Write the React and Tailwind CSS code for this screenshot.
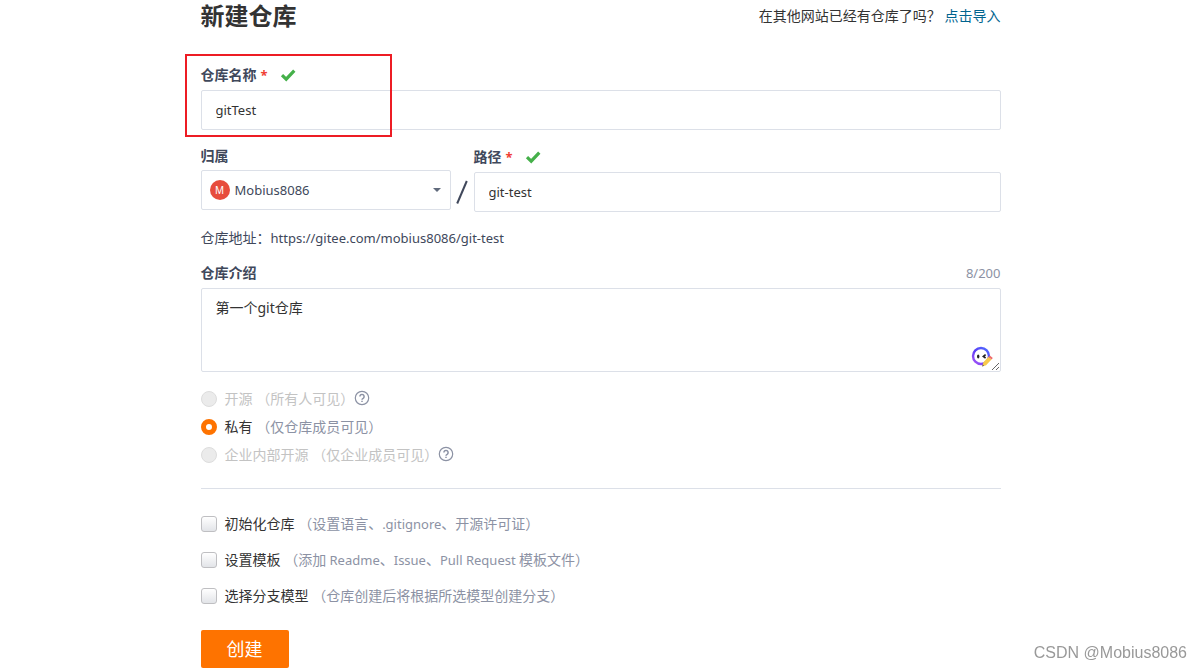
import React from 'react';

const visibilityOptions = [
  { value: 'public', label: '开源', hint: '（所有人可见）', disabled: true, help: true },
  { value: 'private', label: '私有', hint: '（仅仓库成员可见）', disabled: false, help: false },
  { value: 'enterprise', label: '企业内部开源', hint: '（仅企业成员可见）', disabled: true, help: true },
];

const setupOptions = [
  { id: 'init', label: '初始化仓库', hint: <>（设置语言、<Latin>.gitignore</Latin>、开源许可证）</> },
  {
    id: 'template',
    label: '设置模板',
    hint: <>（添加<Latin> Readme</Latin>、<Latin>Issue</Latin>、<Latin>Pull Request </Latin>模板文件）</>,
  },
  { id: 'branch', label: '选择分支模型', hint: '（仓库创建后将根据所选模型创建分支）' },
];

function Latin({ children }) {
  return <span className="text-[13px]">{children}</span>;
}

function ValidIcon() {
  return (
    <svg viewBox="0 0 16 16" className="w-4 h-4 ml-3" fill="none">
      <path d="M2 8.2l4.2 4L14.3 3.6" stroke="#45b04a" strokeWidth="3.2" />
    </svg>
  );
}

function FieldLabel({ htmlFor, children, required, valid }) {
  return (
    <div className="flex items-center mb-1 leading-[22px]">
      <label htmlFor={htmlFor} className="font-bold text-[#40485b]">
        {children}
        {required && <span className="ml-1 text-[13px] text-[#f04134]">*</span>}
      </label>
      {valid && <ValidIcon />}
    </div>
  );
}

function HelpIcon() {
  return (
    <svg viewBox="0 0 16 16" className="w-4 h-4 mb-0.5 text-[#8c92a4]" fill="none" stroke="currentColor">
      <circle cx="8" cy="8" r="6.7" strokeWidth="1.2" />
      <path d="M5.9 6.5a2.1 2.1 0 1 1 3.2 1.8c-.7.4-1.1.7-1.1 1.4" strokeWidth="1.5" />
      <path d="M8 10.7v1.4" strokeWidth="1.5" />
    </svg>
  );
}

function AssistantIcon() {
  return (
    <svg viewBox="0 0 22 22" className="w-[22px] h-[22px]" fill="none">
      <defs>
        <linearGradient id="ring" x1="3" y1="18" x2="17" y2="3" gradientUnits="userSpaceOnUse">
          <stop offset="0" stopColor="#a855f7" />
          <stop offset="0.5" stopColor="#5b3df5" />
          <stop offset="1" stopColor="#4f6bff" />
        </linearGradient>
      </defs>
      <circle cx="10" cy="10" r="8" stroke="url(#ring)" strokeWidth="2.4" fill="#fff" />
      <ellipse cx="7.2" cy="10.4" rx="1.2" ry="2" fill="#222" />
      <path d="M14.6 8.6l-2.2 1.8 2.2 1.6" stroke="#222" strokeWidth="1.7" />
      <path d="M11.2 20.4l1.1-3.9 5.2-5.7 3 2.6-5.4 5.9z" fill="#f8c94a" />
      <path d="M17.5 10.8l1.3-1.4 3 2.6-1.3 1.4z" fill="#ef6a6a" />
      <path d="M11.2 20.4l.5-1.8 1.4 1.2z" fill="#555" />
    </svg>
  );
}

export default function App() {
  const [name, setName] = React.useState('gitTest');
  const [path, setPath] = React.useState('git-test');
  const [intro, setIntro] = React.useState('第一个git仓库');
  const [visibility, setVisibility] = React.useState('private');

  return (
    <div className="bg-white text-sm text-[#333] font-['Noto_Sans','Noto_Sans_CJK_SC',sans-serif]">
      <form className="w-full max-w-[800px] mx-auto" onSubmit={(e) => e.preventDefault()}>
        {/* Header */}
        <div className="flex items-center justify-between h-8">
          <h1 className="text-2xl leading-8 font-bold">新建仓库</h1>
          <p className="leading-8">
            在其他网站已经有仓库了吗？ <a href="#import" className="text-[#00648f]">点击导入</a>
          </p>
        </div>

        {/* Repository name */}
        <div className="relative mt-8">
          <FieldLabel htmlFor="name" required valid>仓库名称</FieldLabel>
          <input
            id="name"
            value={name}
            onChange={(e) => setName(e.target.value)}
            className="block w-full h-10 px-3.5 text-[13px] border border-[#dce0e8] rounded-xs outline-none"
          />
          <div className="absolute -left-4 -top-2.5 w-[207px] h-[83px] border-2 border-[#ed1c24] pointer-events-none" />
        </div>

        {/* Owner and path */}
        <div className="flex items-start mt-4">
          <div className="w-[250px]">
            <label htmlFor="owner" className="block mb-1 leading-5 font-bold text-[#40485b]">归属</label>
            <div className="relative">
              <select
                id="owner"
                className="block w-full h-10 pl-[33px] pr-8 text-[13px] text-[#40485b] bg-white border border-[#dce0e8] rounded-xs appearance-none outline-none"
              >
                <option>Mobius8086</option>
              </select>
              <span className="absolute left-[9px] top-2.5 flex items-center justify-center w-5 h-5 rounded-full bg-[#e74c3c] text-white text-[10px] pointer-events-none">
                M
              </span>
              <span className="absolute right-2.5 top-[18px] border-x-4 border-t-4 border-x-transparent border-t-[#606a7c] pointer-events-none" />
            </div>
          </div>
          <div className="flex justify-center w-[23px] mt-7">
            <svg viewBox="0 0 12 24" className="w-3 h-6 mt-1.5" fill="none">
              <path d="M10.8 1L1.2 23.5" stroke="#40485b" strokeWidth="2" />
            </svg>
          </div>
          <div className="flex-1">
            <FieldLabel htmlFor="path" required valid>路径</FieldLabel>
            <input
              id="path"
              value={path}
              onChange={(e) => setPath(e.target.value)}
              className="block w-full h-10 px-3.5 text-[13px] border border-[#dce0e8] rounded-xs outline-none"
            />
          </div>
        </div>

        <p className="mt-4 leading-5 text-[#40485b]">
          仓库地址：<Latin>https://gitee.com/mobius8086/{path}</Latin>
        </p>

        {/* Introduction */}
        <div className="mt-3.5">
          <div className="flex justify-between">
            <FieldLabel htmlFor="intro">仓库介绍</FieldLabel>
            <span className="text-[13px] leading-[22px] text-[#8c92a4]">{intro.length}/200</span>
          </div>
          <div className="relative">
            <textarea
              id="intro"
              value={intro}
              maxLength={200}
              onChange={(e) => setIntro(e.target.value)}
              className="block w-full h-[84px] px-3.5 py-2 leading-[22px] border border-[#dce0e8] rounded-xs outline-none resize-y"
            />
            <span className="absolute right-2 bottom-1 pointer-events-none">
              <AssistantIcon />
            </span>
          </div>
        </div>

        {/* Visibility */}
        <div className="flex flex-col gap-1.5 mt-4">
          {visibilityOptions.map((option) => (
            <div key={option.value} className="flex items-center leading-[22px]">
              <input
                type="radio"
                id={option.value}
                name="visibility"
                disabled={option.disabled}
                checked={visibility === option.value}
                onChange={() => setVisibility(option.value)}
                className="w-4 h-4 mr-2 rounded-full appearance-none border border-[#ddd] bg-[#ebebeb] checked:border-5 checked:border-[#fe7300] checked:bg-white"
              />
              <label htmlFor={option.value} className={option.disabled ? 'text-[#c3c3c3]' : ''}>
                {option.label} <span className={option.disabled ? '' : 'text-[#8c92a4]'}>{option.hint}</span>
              </label>
              {option.help && <HelpIcon />}
            </div>
          ))}
        </div>

        <hr className="mt-[22px] border-[#dce0e8]" />

        {/* Setup */}
        <div className="flex flex-col gap-3.5 mt-6">
          {setupOptions.map((option) => (
            <div key={option.id} className="flex items-center leading-[22px]">
              <input
                type="checkbox"
                id={option.id}
                className="w-4 h-4 mr-2 rounded-[3px] appearance-none border border-[#bfbfc2] bg-linear-to-b from-white to-[#e2e4e8] checked:bg-[#fe7300]"
              />
              <label htmlFor={option.id}>
                {option.label} <span className="text-[#8c92a4]">{option.hint}</span>
              </label>
            </div>
          ))}
        </div>

        <button type="submit" className="block w-[88px] h-[38px] mt-[23px] bg-[#fe7300] rounded-xs text-white text-lg leading-none">
          创建
        </button>
      </form>

      <div className="fixed right-3.5 bottom-1 font-['Liberation_Sans',sans-serif] text-base text-[#999] pointer-events-none">
        CSDN @Mobius8086
      </div>
    </div>
  );
}
